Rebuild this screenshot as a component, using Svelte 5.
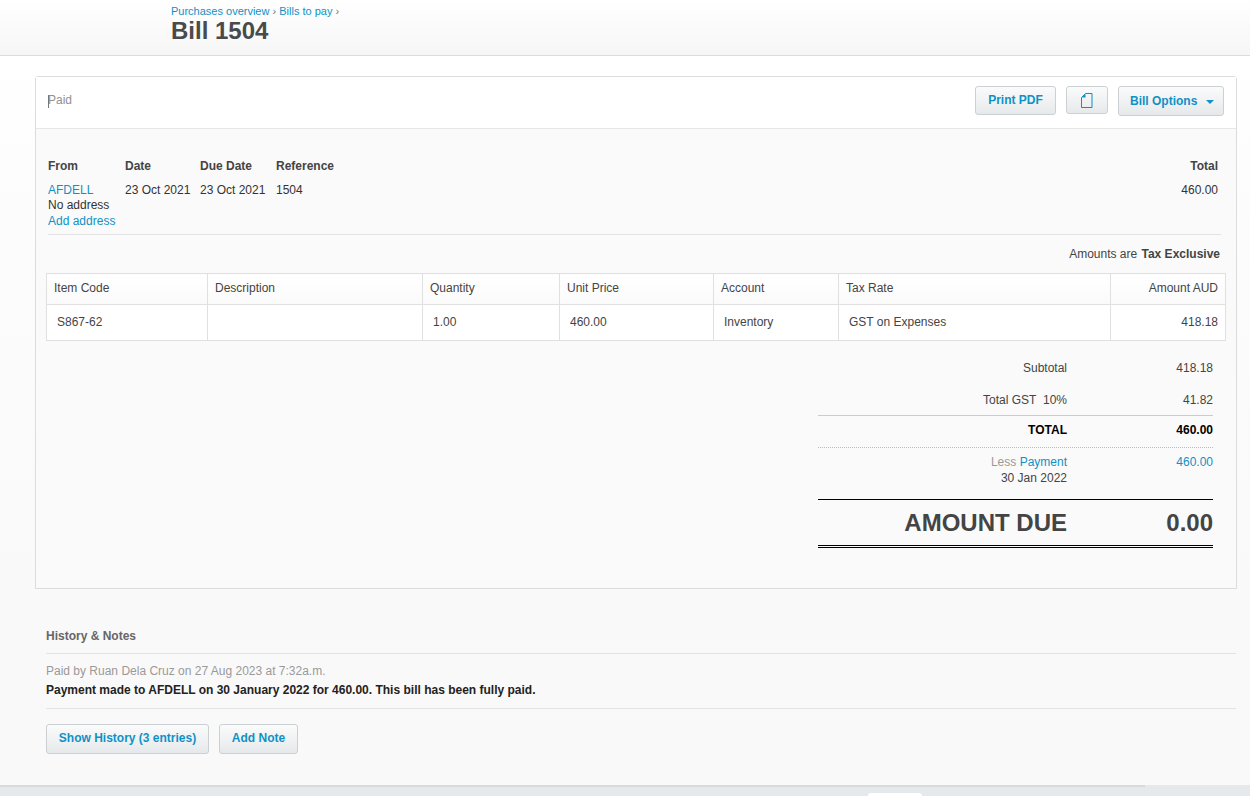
<script>
	const columns = [
		{ label: 'Item Code', value: 'S867-62', width: 161 },
		{ label: 'Description', value: '', width: 215 },
		{ label: 'Quantity', value: '1.00', width: 137 },
		{ label: 'Unit Price', value: '460.00', width: 154 },
		{ label: 'Account', value: 'Inventory', width: 125 },
		{ label: 'Tax Rate', value: 'GST on Expenses', width: 272 },
		{ label: 'Amount AUD', value: '418.18', width: 115, right: true }
	]
</script>

<header class="page-head">
	<nav class="crumbs"><a href="#top">Purchases overview</a> › <a href="#top">Bills to pay</a> ›</nav>
	<h1>Bill 1504</h1>
</header>

<main class="page">
	<section class="card">
		<div class="card-head">
			<span class="status">Paid</span>
			<div class="actions">
				<button class="btn print">Print PDF</button>
				<button class="btn copy" aria-label="Copy">
					<svg width="12" height="15" viewBox="0 0 12 15">
						<path d="M.5 14.5V4.5L4.5 .5h6.5v14z" fill="none" stroke="#0f8fc0" />
						<path d="M1 4.5L4.5 1v3.5z" fill="#0f8fc0" />
					</svg>
				</button>
				<button class="btn options">Bill Options <span class="caret"></span></button>
			</div>
		</div>

		<div class="card-body">
			<div class="meta">
				<div class="from">
					<strong>From</strong>
					<a href="#top">AFDELL</a>
					<span>No address</span>
					<a href="#top">Add address</a>
				</div>
				<div class="date">
					<strong>Date</strong>
					<span>23 Oct 2021</span>
				</div>
				<div class="due">
					<strong>Due Date</strong>
					<span>23 Oct 2021</span>
				</div>
				<div>
					<strong>Reference</strong>
					<span>1504</span>
				</div>
				<div class="total">
					<strong>Total</strong>
					<span>460.00</span>
				</div>
			</div>

			<p class="tax-note">Amounts are <strong>Tax Exclusive</strong></p>

			<table class="lines">
				<colgroup>
					{#each columns as col}
						<col style="width: {col.width}px" />
					{/each}
				</colgroup>
				<thead>
					<tr>
						{#each columns as col}
							<th class:right={col.right}>{col.label}</th>
						{/each}
					</tr>
				</thead>
				<tbody>
					<tr>
						{#each columns as col}
							<td class:right={col.right}>{col.value}</td>
						{/each}
					</tr>
				</tbody>
			</table>

			<div class="totals">
				<div class="row subtotal"><span>Subtotal</span><span>418.18</span></div>
				<div class="row gst"><span>Total GST&nbsp; 10%</span><span>41.82</span></div>
				<div class="row grand"><span>TOTAL</span><span>460.00</span></div>
				<div class="row payment">
					<span class="pay-label">
						<span class="less">Less</span> <a href="#top">Payment</a><br />30 Jan 2022
					</span>
					<a href="#top">460.00</a>
				</div>
				<div class="row due-row"><span>AMOUNT DUE</span><span>0.00</span></div>
			</div>
		</div>
	</section>

	<section class="history">
		<h2>History &amp; Notes</h2>
		<div class="entry">
			<p class="who">Paid by Ruan Dela Cruz on 27 Aug 2023 at 7:32a.m.</p>
			<p class="what">Payment made to AFDELL on 30 January 2022 for 460.00. This bill has been fully paid.</p>
		</div>
		<div class="history-actions">
			<button class="btn show">Show History (3 entries)</button>
			<button class="btn note">Add Note</button>
		</div>
	</section>
</main>

<footer class="page-foot">
	<div class="foot-line"></div>
	<div class="foot-tab"></div>
</footer>

<style>
	:global(body) {
		margin: 0;
		background: #f9f9f9;
		font-family: 'Liberation Sans', Arial, sans-serif;
		font-size: 12px;
		color: #333;
		height: 796px;
		overflow: hidden;
	}
	a {
		color: #1091c6;
		text-decoration: none;
	}
	.page-head {
		box-sizing: border-box;
		height: 56px;
		padding: 4px 0 0 171px;
		background: linear-gradient(#fff, #f6f6f6);
		border-bottom: 1px solid #dcdcdc;
	}
	.crumbs {
		font-size: 11px;
		line-height: 14px;
		color: #777;
	}
	h1 {
		margin: 0;
		font-size: 24px;
		line-height: 25px;
		color: #4a4a4a;
	}
	.page {
		background: linear-gradient(#fff, #fdfdfd 100px, #f9f9f9 560px);
		padding: 20px 13px 0 35px;
		height: 729px;
		box-sizing: border-box;
	}
	.card {
		box-sizing: border-box;
		height: 513px;
		background: #fafafa;
		border: 1px solid #dcdcdc;
		border-radius: 3px 3px 0 0;
	}
	.card-head {
		box-sizing: border-box;
		height: 52px;
		background: #fff;
		border-bottom: 1px solid #e6e6e6;
		padding: 9px 12px 0;
		display: flex;
		justify-content: space-between;
		align-items: flex-start;
	}
	.status {
		margin-top: 7px;
		color: #909090;
		position: relative;
	}
	.status::before {
		content: '';
		position: absolute;
		left: 0;
		top: 2px;
		width: 1px;
		height: 13px;
		background: #777;
	}
	.actions {
		display: flex;
		gap: 10px;
	}
	.btn {
		font-family: inherit;
		font-size: 12px;
		font-weight: bold;
		color: #1091c6;
		background: linear-gradient(#fafbfb, #e6e9eb);
		border: 1px solid #ccd0d3;
		border-radius: 3px;
		padding: 0 0 2px;
		display: block;
	}
	.print {
		width: 81px;
		height: 29px;
	}
	.copy {
		width: 42px;
		height: 28px;
		padding: 0;
		display: flex;
		align-items: center;
		justify-content: center;
	}
	.options {
		width: 106px;
		height: 30px;
		display: flex;
		align-items: center;
		padding: 0 0 0 11px;
		gap: 9px;
	}
	.caret {
		width: 0;
		height: 0;
		border: 4px solid transparent;
		border-top-color: #1091c6;
		border-bottom: 0;
		margin-top: 2px;
	}
	.card-body {
		padding: 30px 10px 0;
	}
	.meta {
		display: flex;
		margin: 0 5px 0 2px;
		padding: 0 0 5px;
		position: relative;
		border-bottom: 1px solid #e3e3e3;
		line-height: 15.5px;
	}
	.meta > div {
		display: flex;
		flex-direction: column;
	}
	.meta strong {
		color: #444;
		margin-bottom: 8px;
	}
	.from {
		width: 77px;
	}
	.date {
		width: 75px;
	}
	.due {
		width: 76px;
	}
	.total {
		margin-left: auto;
		text-align: right;
		padding-right: 3px;
	}
	.tax-note {
		margin: 12px 6px 12px 0;
		line-height: 14px;
		text-align: right;
		color: #444;
	}
	.tax-note strong {
		margin-left: 1px;
	}
	.lines {
		border-collapse: collapse;
		table-layout: fixed;
		width: 1179px;
		background: #fff;
	}
	.lines th,
	.lines td {
		border: 1px solid #e0e0e0;
		text-align: left;
		font-weight: normal;
		color: #444;
		padding: 0 7px;
	}
	.lines th {
		height: 28px;
		padding-bottom: 2px;
		background: linear-gradient(#fff, #fafafa);
	}
	.lines td {
		height: 33px;
		padding-left: 10px;
		padding-bottom: 2px;
	}
	.lines .right {
		text-align: right;
		padding-right: 7px;
	}
	.totals {
		margin: 17px 13px 0 auto;
		width: 395px;
	}
	.row {
		display: flex;
		justify-content: space-between;
		padding-left: 0;
		color: #444;
	}
	.row > :first-child {
		width: 249px;
		text-align: right;
	}
	.subtotal {
		height: 32px;
		line-height: 21px;
	}
	.gst {
		height: 25px;
		line-height: 21px;
		border-bottom: 1px solid #ccc;
	}
	.grand {
		color: #000;
		font-weight: bold;
		height: 31px;
		line-height: 28px;
		border-bottom: 1px dotted #bbb;
	}
	.payment {
		line-height: 16px;
		padding-top: 6px;
		height: 45px;
		border-bottom: 1px solid #000;
	}
	.less {
		color: #999;
	}
	.due-row {
		font-size: 24px;
		font-weight: bold;
		height: 45px;
		line-height: 46px;
		border-bottom: 3px double #000;
		color: #444;
	}
	.history {
		padding: 40px 1px 0 11px;
	}
	h2 {
		margin: 0;
		font-size: 12px;
		line-height: 14px;
		color: #666;
		padding-bottom: 10px;
		border-bottom: 1px solid #e3e3e3;
	}
	.entry {
		padding: 8px 0 9px;
		border-bottom: 1px solid #e3e3e3;
		line-height: 18px;
	}
	.entry p {
		margin: 0;
	}
	.who {
		color: #999;
	}
	.entry .what {
		margin-top: 1px;
		font-weight: bold;
		color: #222;
	}
	.history-actions {
		display: flex;
		gap: 10px;
		margin-top: 15px;
	}
	.show {
		width: 163px;
		height: 30px;
	}
	.note {
		width: 79px;
		height: 30px;
	}
	.page-foot {
		position: absolute;
		top: 785px;
		left: 0;
		right: 0;
		height: 11px;
		background: #e6e9eb;
		overflow: hidden;
	}
	.foot-line {
		width: 1145px;
		height: 2px;
		background: #d8dbdc;
	}
	.foot-tab {
		position: absolute;
		left: 868px;
		top: 8px;
		width: 54px;
		height: 10px;
		background: #fff;
		border-radius: 3px;
	}
</style>
